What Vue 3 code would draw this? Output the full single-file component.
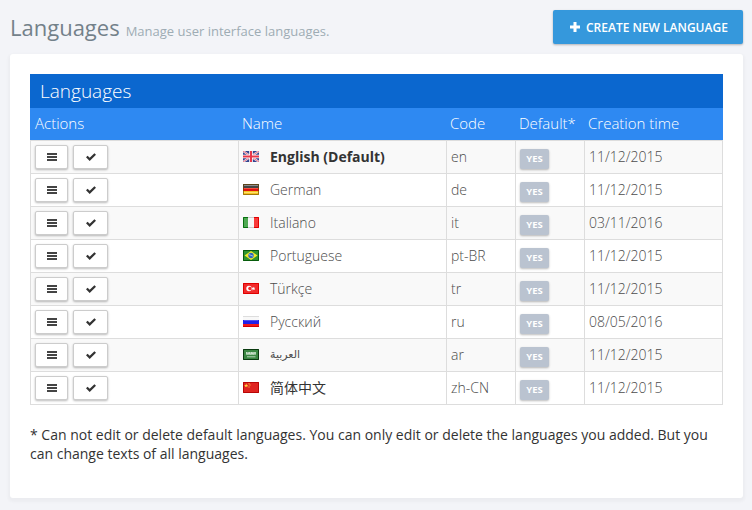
<script setup>
const languages = [
  { flag: 'gb', name: 'English (Default)', code: 'en', date: '11/12/2015', isDefault: true },
  { flag: 'de', name: 'German', code: 'de', date: '11/12/2015' },
  { flag: 'it', name: 'Italiano', code: 'it', date: '03/11/2016' },
  { flag: 'br', name: 'Portuguese', code: 'pt-BR', date: '11/12/2015' },
  { flag: 'tr', name: 'Türkçe', code: 'tr', date: '11/12/2015' },
  { flag: 'ru', name: 'Русский', code: 'ru', date: '08/05/2016' },
  { flag: 'sa', name: 'العربية', code: 'ar', date: '11/12/2015' },
  { flag: 'cn', name: '简体中文', code: 'zh-CN', date: '11/12/2015' },
]
</script>

<template>
  <div class="page">
    <header class="head">
      <h1>Languages</h1>
      <small>Manage user interface languages.</small>
      <button class="create">
        <svg width="10" height="10" viewBox="0 0 10 10"><path d="M3.500 0h3v3.500H10v3H6.500V10h-3V6.500H0v-3h3.500z" fill="#fff" /></svg>
        <span>CREATE NEW LANGUAGE</span>
      </button>
    </header>

    <main class="card">
      <div class="table">
        <div class="title"><span>Languages</span></div>
        <div class="row th">
          <div><span>Actions</span></div>
          <div><span>Name</span></div>
          <div><span>Code</span></div>
          <div><span>Default*</span></div>
          <div><span>Creation time</span></div>
        </div>
        <div v-for="l in languages" :key="l.code" class="row td">
          <div class="actions">
            <button class="btn menu">
              <svg width="10" height="8" viewBox="0 0 10 8"><path d="M0 0h10v2H0zM0 3h10v2H0zM0 6h10v2H0z" fill="#444" /></svg>
            </button>
            <button class="btn tick">
              <svg width="10" height="8" viewBox="0 0 10 8"><path d="M0 4.300 1.600 2.700 3.700 4.800 8.400 0.200 10 1.700 3.700 7.900z" fill="#333" /></svg>
            </button>
          </div>
          <div class="name">
            <svg class="flag" width="16" height="11" viewBox="0 0 16 11">
              <g v-if="l.flag === 'gb'">
                <path fill="#33458f" d="M0 0h16v11H0z" />
                <path d="M0 0l16 11M16 0L0 11" stroke="#f4e4ec" stroke-width="2" />
                <path d="M0 0l16 11M16 0L0 11" stroke="#e0566a" stroke-width=".8" />
                <path d="M8 0v11M0 5.500h16" stroke="#fff" stroke-width="3.600" />
                <path d="M8 0v11M0 5.500h16" stroke="#e8384a" stroke-width="2" />
              </g>
              <g v-else-if="l.flag === 'de'">
                <path fill="#444" d="M0 0h16v4H0z" /><path fill="#e01010" d="M0 4h16v3H0z" /><path fill="#f5c520" d="M0 7h16v4H0z" />
                <path fill="#8b8b8b" d="M1 1h14v1H1z" /><path fill="#f85040" d="M1 4h14v1H1z" /><path fill="#ffe070" d="M1 8h14v1H1z" />
                <path fill="none" stroke="#6b4300" stroke-opacity=".6" d="M.5.5h15v10H.5z" />
              </g>
              <g v-else-if="l.flag === 'it'">
                <path fill="#4fa952" d="M0 0h5v11H0z" /><path fill="#f6f6f6" d="M5 0h6v11H5z" /><path fill="#f83b3b" d="M11 0h5v11h-5z" />
                <path d="M5 .5H.5v10H5" fill="none" stroke="#087010" /><path d="M11 .5h4.500v10H11" fill="none" stroke="#e00000" /><path d="M5 .5h6M5 10.500h6" stroke="#ccc" />
              </g>
              <g v-else-if="l.flag === 'br'">
                <path fill="#2f9430" d="M0 0h16v11H0z" /><path fill="none" stroke="#075c0c" d="M.5.5h15v10H.5z" />
                <path fill="#f5ea27" d="M8 1l6.500 4.500L8 10 1.500 5.500z" /><circle cx="8" cy="5.500" r="2.700" fill="#3169bd" /><path d="M5.800 4.500l4.300 1.700" stroke="#b9d5ec" stroke-width=".8" />
              </g>
              <g v-else-if="l.flag === 'tr'">
                <path fill="#f12b2b" d="M0 0h16v11H0z" /><path fill="none" stroke="#df0000" d="M.5.5h15v10H.5z" />
                <circle cx="6" cy="5.500" r="2.700" fill="#fff" /><circle cx="6.900" cy="5.500" r="1.700" fill="#f12b2b" />
                <path fill="#fff" d="M8.200 5.500l1.300-.5.500-1.300.8 1.100 1.400-.1-.8 1.100.5 1.200-1.300-.4-1.100.9v-1.400z" />
              </g>
              <g v-else-if="l.flag === 'ru'">
                <path fill="#f8f8f8" d="M0 0h16v4H0z" /><path fill="#2020e8" d="M0 4h16v4H0z" /><path fill="#f01818" d="M0 8h16v3H0z" />
                <path fill="#5050f0" d="M1 4h14v1H1z" /><path fill="#d00000" d="M0 10h16v1H0z" /><path fill="#ddd" d="M0 0h16v1H0z" />
              </g>
              <g v-else-if="l.flag === 'sa'">
                <path fill="#3a8742" d="M0 0h16v11H0z" /><path fill="none" stroke="#0a3a10" d="M.5.5h15v10H.5z" />
                <path fill="#8fbd93" d="M3 3h10v3H3z" />
                <path fill="none" stroke="#d3e6d4" stroke-width=".8" d="M3.500 3v1.800h2V3.500M6.500 3v2h2V3M9.500 3.500v1.500h1.500V3M12.200 3v2M4 7.800h8.500" />
              </g>
              <g v-else>
                <path fill="#df2420" d="M0 0h16v11H0z" /><path fill="none" stroke="#b80606" d="M.5.5h15v10H.5z" />
                <path fill="#ffd83c" d="M3.200 1.500l.6 1.400h1.500l-1.200 1 .5 1.400-1.400-.8-1.400.8.500-1.400-1.200-1h1.500zM5.500 1.200h1v1h-1zM6.500 2.600h1v1h-1zM5.500 4.500h1v1h-1z" />
              </g>
            </svg>
            <span :class="[l.flag, { strong: l.isDefault }]">{{ l.name }}</span>
          </div>
          <div>{{ l.code }}</div>
          <div class="def"><span class="badge">YES</span></div>
          <div class="date">{{ l.date }}</div>
        </div>
      </div>
      <p class="note">* Can not edit or delete default languages. You can only edit or delete the languages you added. But you can change texts of all languages.</p>
    </main>
  </div>
</template>

<style>
body { margin: 0; background: #f3f4f8; }
</style>

<style scoped>
.page { box-sizing: border-box; width: 752px; height: 510px; padding: 10px 9px 12px 10px; font-family: "Open Sans", "Noto Sans CJK SC", sans-serif; background: #f3f4f8; }
.head { display: flex; align-items: baseline; height: 44px; white-space: nowrap; }
h1 { margin: 0; font-size: 22px; line-height: 35px; font-weight: 400; color: #73818a; }
small { margin-left: 6px; font-size: 13px; color: #9eacb4; }
button { font-family: inherit; }
.create { box-sizing: border-box; align-self: flex-start; display: flex; align-items: center; gap: 6px; margin-left: auto; width: 190px; height: 34px; padding: 0 0 0 17px; border: 0; border-radius: 2px; background: #3598dc; color: #fff; font-size: 12px; font-weight: 600; box-shadow: 0 1px 3px rgba(0,0,0,.1), 0 1px 2px rgba(0,0,0,.18); }
.card { box-sizing: border-box; height: 444px; padding: 20px; border-radius: 3px; background: #fff; box-shadow: 0 2px 3px 2px rgba(0,0,0,.03); }
.table { width: 693px; }
.title { height: 34px; padding-left: 10px; background: #0b67cf; color: #fff; font-size: 19px; font-weight: 300; line-height: 34px; }
.row { display: grid; grid-template-columns: 208px 208px 69px 69px 139px; }
.th { height: 32px; background: #2e89f2; color: #fff; font-size: 15px; font-weight: 300; line-height: 31px; white-space: nowrap; }
.th > div { padding-left: 4px; }
.th > div:first-child { padding-left: 5px; }
.td { height: 33px; font-size: 14px; font-weight: 300; line-height: 32px; color: #4c4c4c; }
.td:nth-child(odd) { background: #f9f9f9; }
.td > div { box-sizing: border-box; border-top: 1px solid #ddd; border-left: 1px solid #ddd; padding-left: 4px; }
.td > div:last-child { border-right: 1px solid #ddd; }
.td:last-child { height: 34px; }
.td:last-child > div { border-bottom: 1px solid #ddd; }
.actions { display: flex; gap: 5px; padding-top: 4px; }
.btn { box-sizing: border-box; display: flex; align-items: center; justify-content: center; height: 24px; padding: 0; border: 1px solid #ccc; border-radius: 2px; background: #fff; box-shadow: 0 1px 3px rgba(0,0,0,.1), 0 1px 2px rgba(0,0,0,.18); }
.menu { width: 33px; }
.tick { width: 35px; }
.name { display: flex; align-items: flex-start; }
.flag { flex: none; margin: 10px 11px 0 0; }
.strong { font-weight: 700; font-size: 14px; color: #333; }
.sa { font-family: "DejaVu Sans", sans-serif; font-size: 11px; font-weight: 400; }
.cn { font-family: "Noto Sans CJK SC", sans-serif; font-weight: 400; line-height: 30px; color: #333; }
.def { display: flex; padding-top: 8px; }
.badge { width: 29px; height: 20px; border-radius: 2px; background: #bac3d0; color: #fff; font-size: 9.5px; font-weight: 700; line-height: 19px; text-align: center; box-shadow: 0 1px 3px rgba(0,0,0,.1), 0 1px 2px rgba(0,0,0,.18); }
.note { margin: 20px 0 0; font-size: 14px; line-height: 19px; color: #333; }
</style>
